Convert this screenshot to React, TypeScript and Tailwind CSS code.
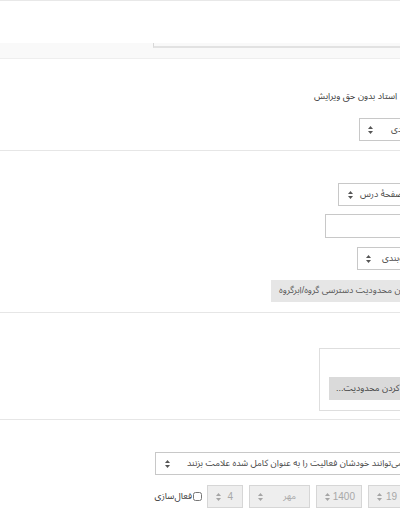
import React from 'react';

const FONT = "font-['Liberation_Sans','Noto_Sans_Arabic',sans-serif]";

// فلش‌های بالا/پایین داخل select
const UpDown: React.FC<{ muted?: boolean }> = ({ muted }) => (
  <svg width="5" height="8" viewBox="0 0 5 8" className={'shrink-0 ' + (muted ? 'fill-[#a5a5a5]' : 'fill-[#555]')}>
    <path d="M2.5 0 L5 3 H0 Z" />
    <path d="M2.5 8 L5 5 H0 Z" />
  </svg>
);

interface SelectProps {
  text: string;
  className: string;
  disabled?: boolean;
  fill?: boolean;
  digits?: boolean;
}

const Select: React.FC<SelectProps> = ({ text, className, disabled, fill, digits }) => (
  <div
    className={
      'h-[23px] flex items-center border shrink-0 ' +
      (disabled
        ? 'bg-[#eeeeee] border-[#d6d6d6] text-[#a8a8a8] '
        : 'bg-white border-[#c8c8c8] text-[#444] ') +
      className
    }
  >
    <UpDown muted={disabled} />
    <span
      dir="rtl"
      className={
        'whitespace-nowrap leading-none ' +
        (fill ? 'flex-1 ' : '') +
        (digits ? 'text-[10px]' : 'text-[9px]')
      }
    >
      {text}
    </span>
  </div>
);

const Divider = () => <div className="h-px bg-[#e6e6e6]" />;

export default function App() {
  return (
    <div className={'w-[400px] h-[516px] overflow-hidden bg-white ' + FONT}>
      {/* بخش بالا: انتهای ویرایشگر */}
      <div className="h-px bg-[#e8e8e8]" />
      <div className="h-[42px]" />
      <div className="h-[15px] bg-[#f9f9f9] flex">
        <div className="w-[153px]" />
        <div className="flex-1 h-[5px] border-b-2 border-[#e2e2e2] border-l border-l-[#d8d8d8]" />
      </div>
      <div className="h-px bg-[#eeeeee]" />

      {/* بخش نقش */}
      <div className="h-[91px] flex flex-col">
        <div className="h-[31px]" />
        <div className="pl-[314px] h-[14px] flex items-center">
          <span dir="rtl" className="shrink-0 whitespace-nowrap text-[9px] text-[#3a3a3a]">
            استاد بدون حق ویرایش
          </span>
        </div>
        <div className="h-[14px]" />
        <div className="pl-[359px] flex">
          <Select text="عادی" className="pl-[8px] pr-[10px] gap-[18px]" />
        </div>
      </div>
      <Divider />

      {/* تنظیمات عمومی ماژول */}
      <div className="h-[161px] flex flex-col">
        <div className="h-[32px]" />
        <div className="pl-[338px] flex">
          <Select text="نمایش در صفحهٔ درس" className="pl-[9px] pr-[10px] gap-[7px]" />
        </div>
        <div className="h-[8px]" />
        <div className="pl-[325px] flex">
          <div className="w-[100px] shrink-0 h-[24px] border border-[#c8c8c8] bg-white" />
        </div>
        <div className="h-[9px]" />
        <div className="pl-[357px] flex">
          <Select text="بدون گروه‌بندی" className="pl-[8px] pr-[10px] gap-[11px]" />
        </div>
        <div className="h-[10px]" />
        <div className="pl-[271px] flex">
          <div className="shrink-0 h-[22px] bg-[#e6e6e6] text-[#555] flex items-center pl-[8px] pr-[10px]">
            <span dir="rtl" className="whitespace-nowrap text-[9px]">
              اضافه کردن محدودیت دسترسی گروه/ابرگروه
            </span>
          </div>
        </div>
      </div>
      <Divider />

      {/* محدودیت دسترسی */}
      <div className="h-[106px] flex flex-col">
        <div className="h-[35px]" />
        <div className="pl-[319px] flex">
          <div className="w-[140px] shrink-0 h-[63px] border border-[#dedede] bg-white flex flex-col pl-[9px]">
            <div className="h-[28px]" />
            <div className="self-start h-[23px] bg-[#dadada] text-[#444] flex items-center pl-[7px] pr-[10px]">
              <span dir="rtl" className="whitespace-nowrap text-[9px]">
                اضافه کردن محدودیت...
              </span>
            </div>
          </div>
        </div>
      </div>
      <Divider />

      {/* تکمیل فعالیت */}
      <div className="flex flex-col">
        <div className="h-[32px]" />
        <div className="pl-[155px] flex">
          <Select
            text="دانش‌آموزان می‌توانند خودشان فعالیت را به عنوان کامل شده علامت بزنند"
            className="pl-[9px] pr-[10px] gap-[17px]"
          />
        </div>
        <div className="h-[10px]" />
        <div className="pl-[156px] flex items-center">
          <span dir="rtl" className="shrink-0 whitespace-nowrap text-[9px] text-[#333] w-[36px]">
            فعال‌سازی
          </span>
          <input type="checkbox" className="shrink-0 w-[9px] h-[9px] ml-[1px] mr-[5px]" readOnly />
          <Select text="4" disabled fill digits className="w-[36px] pl-[8px] pr-[9px]" />
          <div className="w-[6px] shrink-0" />
          <Select text="مهر" disabled fill className="w-[61px] pl-[8px] pr-[13px]" />
          <div className="w-[6px] shrink-0" />
          <Select text="1400" disabled fill digits className="w-[46px] pl-[8px] pr-[6px]" />
          <div className="w-[6px] shrink-0" />
          <Select text="19" disabled digits className="pl-[8px] pr-[10px] gap-[4px]" />
        </div>
      </div>
    </div>
  );
}
